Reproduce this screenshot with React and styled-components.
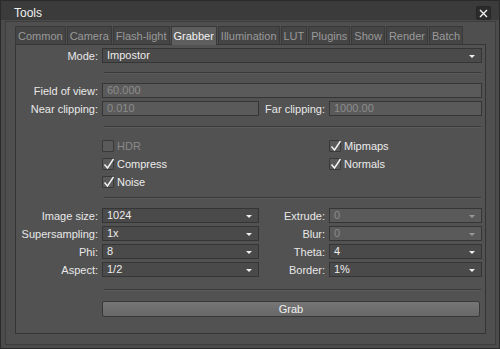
import styled, { createGlobalStyle } from "styled-components";

const Global = createGlobalStyle`
  html, body {
    margin: 0;
    padding: 0;
    background: #2e2e2e;
  }
  * {
    box-sizing: border-box;
  }
`;

const Window = styled.div`
  width: 500px;
  height: 349px;
  background: #4b4b4b;
  border: 1px solid #2a2a2a;
  font-family: "Liberation Sans", Arial, sans-serif;
  font-size: 11px;
  color: #e6e6e6;
  display: flex;
  flex-direction: column;
`;

const TitleBar = styled.div`
  height: 19px;
  background: #3b3b3b;
  display: flex;
  align-items: center;
  justify-content: space-between;
  padding: 0 8px 0 13px;
  font-size: 12px;
  color: #f0f0f0;
`;

const CloseButton = styled.div`
  width: 15px;
  height: 14px;
  margin-top: 5px;
  background: #2b2b2b;
  border: 1px solid #262626;
  border-radius: 2px;
  display: flex;
  align-items: center;
  justify-content: center;
`;

const Body = styled.div`
  flex: 1;
  margin: 1px 3px 3px 4px;
  border: 1px solid #3d3d3d;
  background: #4f4f4f;
  padding: 4px 9px 10px 9px;
  display: flex;
  flex-direction: column;
`;

const TabRow = styled.div`
  display: flex;
  gap: 1px;
  height: 18px;
  align-items: flex-end;
`;

const Tab = styled.div`
  height: ${(p) => (p.$active ? "19px" : "18px")};
  padding: 0 2px;
  display: flex;
  align-items: center;
  white-space: nowrap;
  font-size: 11px;
  background: ${(p) => (p.$active ? "#5e5e5e" : "#454545")};
  color: ${(p) => (p.$active ? "#f2f2f2" : "#9a9a9a")};
  border: 1px solid #393939;
  border-bottom: none;
  margin-bottom: ${(p) => (p.$active ? "-1px" : "0")};
  position: relative;
`;

const Panel = styled.div`
  flex: 1;
  border: 1px solid #353535;
  background: #525252;
  padding: 3px 4px 0 0;
  display: flex;
  flex-direction: column;
`;

const Grid = styled.div`
  display: grid;
  grid-template-columns: 82px 157px 62px 153px;
  column-gap: 4px;
  row-gap: ${(p) => p.$gap || 3}px;
  align-items: center;
`;

const Label = styled.div`
  text-align: right;
  white-space: nowrap;
  color: #e8e8e8;
  font-size: 11px;
`;

const Field = styled.div`
  grid-column: ${(p) => p.$span || "auto"};
  height: 15px;
  border: 1px solid #353535;
  background: ${(p) => (p.$disabled ? "#5a5a5a" : "#4a4a4a")};
  color: ${(p) => (p.$disabled ? "#8c8c8c" : "#ececec")};
  display: flex;
  align-items: center;
  justify-content: space-between;
  padding: 0 6px 0 4px;
  font-size: 11px;
  line-height: 1;
`;

const Arrow = styled.span`
  width: 0;
  height: 0;
  border-left: 3px solid transparent;
  border-right: 3px solid transparent;
  border-top: 3px solid ${(p) => (p.$disabled ? "#9a9a9a" : "#f0f0f0")};
  margin-top: 2px;
`;

const Separator = styled.div`
  margin: ${(p) => p.$m || "10px 0"};
  margin-left: 88px;
  height: 2px;
  border-top: 1px solid #393939;
  border-bottom: 1px solid #5c5c5c;
`;

const CheckGrid = styled.div`
  display: grid;
  grid-template-columns: 227px 160px;
  margin-left: 86px;
  row-gap: 5px;
`;

const CheckItem = styled.div`
  display: flex;
  align-items: center;
  gap: 3px;
  height: 13px;
  color: ${(p) => (p.$disabled ? "#8a8a8a" : "#ececec")};
  font-size: 11px;
`;

const Box = styled.div`
  width: 12px;
  height: 12px;
  border: 1px solid #383838;
  border-radius: 1px;
  background: #5a5a5a;
  position: relative;
`;

const GrabButton = styled.div`
  margin-left: 86px;
  margin-right: 1px;
  height: 16px;
  border: 1px solid #383838;
  border-radius: 2px;
  background: linear-gradient(#767676, #676767);
  display: flex;
  align-items: center;
  justify-content: center;
  color: #f0f0f0;
  font-size: 11px;
`;

const tabs = [
  "Common",
  "Camera",
  "Flash-light",
  "Grabber",
  "Illumination",
  "LUT",
  "Plugins",
  "Show",
  "Render",
  "Batch",
];

const Check = ({ label, checked, disabled }) => (
  <CheckItem $disabled={disabled}>
    <Box $disabled={disabled}>
      {checked && (
        <svg
          width="12"
          height="12"
          viewBox="0 0 12 12"
          style={{ position: "absolute", left: 0, top: -1 }}
        >
          <path
            d="M1.5 6.5 L4.5 10 L10.5 1"
            fill="none"
            stroke="#f4f4f4"
            strokeWidth="1.4"
          />
        </svg>
      )}
    </Box>
    {label}
  </CheckItem>
);

const Combo = ({ value, disabled, span }) => (
  <Field $disabled={disabled} $span={span}>
    <span>{value}</span>
    <Arrow $disabled={disabled} />
  </Field>
);

export default function App() {
  return (
    <>
      <Global />
      <Window>
        <TitleBar>
          <span style={{ marginTop: 4 }}>Tools</span>
          <CloseButton>
            <svg width="9" height="9" viewBox="0 0 9 9">
              <path d="M1 1 L8 8 M8 1 L1 8" stroke="#f0f0f0" strokeWidth="1.4" />
            </svg>
          </CloseButton>
        </TitleBar>
        <Body>
          <TabRow>
            {tabs.map((t) => (
              <Tab key={t} $active={t === "Grabber"}>
                {t}
              </Tab>
            ))}
          </TabRow>
          <Panel>
            <Grid>
              <Label>Mode:</Label>
              <Combo value="Impostor" span="2 / 5" />
            </Grid>
            <Separator $m="9px 0 9px 0" />
            <Grid>
              <Label>Field of view:</Label>
              <Field $disabled $span="2 / 5">
                60.000
              </Field>
              <Label>Near clipping:</Label>
              <Field $disabled>0.010</Field>
              <Label>Far clipping:</Label>
              <Field $disabled>1000.00</Field>
            </Grid>
            <Separator $m="10px 0 11px 0" />
            <CheckGrid>
              <Check label="HDR" disabled />
              <Check label="Mipmaps" checked />
              <Check label="Compress" checked />
              <Check label="Normals" checked />
              <Check label="Noise" checked />
            </CheckGrid>
            <Separator $m="9px 0 9px 0" />
            <Grid>
              <Label>Image size:</Label>
              <Combo value="1024" />
              <Label>Extrude:</Label>
              <Combo value="0" disabled />
              <Label>Supersampling:</Label>
              <Combo value="1x" />
              <Label>Blur:</Label>
              <Combo value="0" disabled />
              <Label>Phi:</Label>
              <Combo value="8" />
              <Label>Theta:</Label>
              <Combo value="4" />
              <Label>Aspect:</Label>
              <Combo value="1/2" />
              <Label>Border:</Label>
              <Combo value="1%" />
            </Grid>
            <Separator $m="12px 0 10px 0" />
            <GrabButton>Grab</GrabButton>
          </Panel>
        </Body>
      </Window>
    </>
  );
}
